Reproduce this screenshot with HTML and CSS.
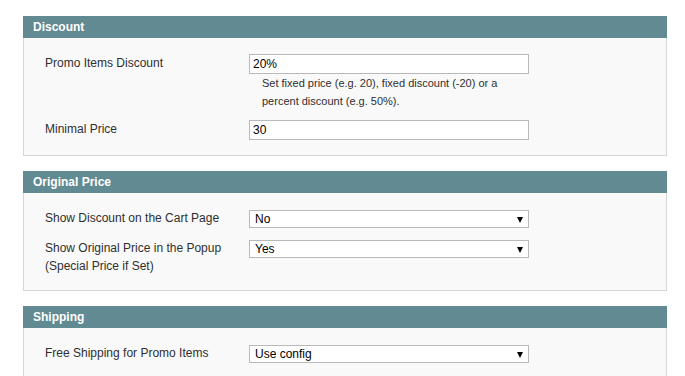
FILE: index.html
```html
<!DOCTYPE html>
<html lang="en">
<head>
    <meta charset="UTF-8">
    <meta name="viewport" content="width=device-width, initial-scale=1.0">
    <title>Promo Items Settings</title>
    <link rel="stylesheet" href="styles.css">
</head>
<body>
    <div class="page">

        <div class="section">
            <div class="section-head"><h4>Discount</h4></div>
            <div class="section-body">
                <div class="row">
                    <label class="label">Promo Items Discount</label>
                    <div class="value">
                        <input type="text" class="input-text" value="20%">
                        <p class="note">Set fixed price (e.g. 20), fixed discount (-20) or a percent discount (e.g. 50%).</p>
                    </div>
                </div>
                <div class="row">
                    <label class="label">Minimal Price</label>
                    <div class="value">
                        <input type="text" class="input-text" value="30">
                    </div>
                </div>
            </div>
        </div>

        <div class="section">
            <div class="section-head"><h4>Original Price</h4></div>
            <div class="section-body">
                <div class="row">
                    <label class="label">Show Discount on the Cart Page</label>
                    <div class="value">
                        <span class="select-wrap">
                            <select class="select">
                                <option selected>No</option>
                                <option>Yes</option>
                            </select>
                        </span>
                    </div>
                </div>
                <div class="row">
                    <label class="label">Show Original Price in the Popup (Special Price if Set)</label>
                    <div class="value">
                        <span class="select-wrap">
                            <select class="select">
                                <option selected>Yes</option>
                                <option>No</option>
                            </select>
                        </span>
                    </div>
                </div>
            </div>
        </div>

        <div class="section">
            <div class="section-head"><h4>Shipping</h4></div>
            <div class="section-body">
                <div class="row">
                    <label class="label">Free Shipping for Promo Items</label>
                    <div class="value">
                        <span class="select-wrap">
                            <select class="select">
                                <option selected>Use config</option>
                                <option>Yes</option>
                                <option>No</option>
                            </select>
                        </span>
                    </div>
                </div>
            </div>
        </div>

    </div>
</body>
</html>
```

FILE: styles.css
```css
* {
    margin: 0;
    padding: 0;
    box-sizing: border-box;
}

body {
    font-family: 'Liberation Sans', Arial, sans-serif;
    font-size: 12px;
    color: #2f2f2f;
    background: #fff;
}

.page {
    padding: 16px 18px 0 23px;
    display: flex;
    flex-direction: column;
    gap: 15px;
    width: 685px;
}

.section {
    width: 644px;
}

.section-head {
    background-color: #628a92;
    height: 22px;
    padding: 0 10px;
    display: flex;
    align-items: center;
}

.section-head h4 {
    color: #fff;
    font-size: 12px;
    font-weight: bold;
    line-height: 18px;
}

.section-body {
    background-color: #f9f9f9;
    border: 1px solid #d6d6d6;
    border-top: none;
    padding: 16px 20px 15px 21px;
    display: flex;
    flex-direction: column;
    gap: 10px;
}

.row {
    display: flex;
    align-items: flex-start;
}

.label {
    width: 204px;
    padding-right: 20px;
    line-height: 18px;
}

.value {
    width: 280px;
}

.input-text {
    display: block;
    width: 280px;
    height: 20px;
    border: 1px solid #b9b9b9;
    background: #fff;
    padding: 0 3px;
    font-family: 'Liberation Sans', Arial, sans-serif;
    font-size: 12px;
    color: #000;
    outline: none;
}

.note {
    font-size: 11px;
    line-height: 18px;
    padding-left: 13px;
    width: 268px;
    color: #2f2f2f;
}

.select-wrap {
    position: relative;
    display: block;
    padding: 1px 0;
}

.select {
    display: block;
    appearance: none;
    -webkit-appearance: none;
    width: 280px;
    height: 18px;
    border: 1px solid #b9b9b9;
    border-radius: 0;
    background: #fff;
    padding: 0 5px;
    font-family: 'Liberation Sans', Arial, sans-serif;
    font-size: 12px;
    color: #000;
    outline: none;
}

.select-wrap::after {
    content: '';
    position: absolute;
    right: 6px;
    top: 8px;
    border-left: 3.5px solid transparent;
    border-right: 3.5px solid transparent;
    border-top: 6px solid #000;
    pointer-events: none;
}
```
